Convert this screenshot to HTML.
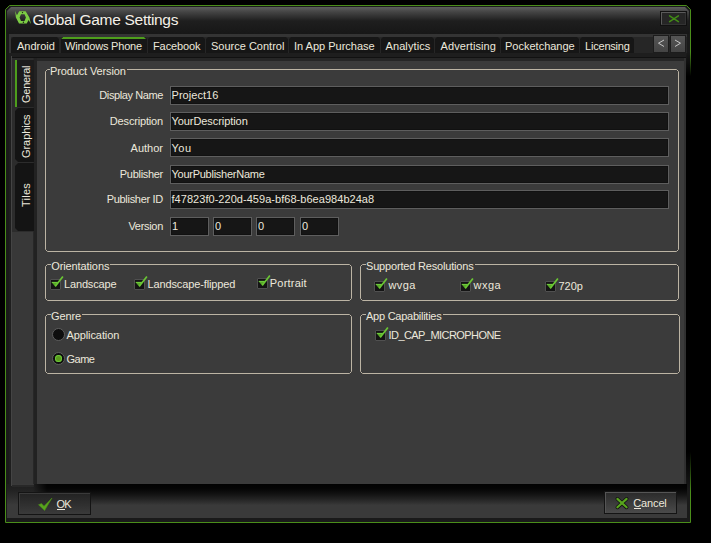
<!DOCTYPE html>
<html><head><meta charset="utf-8">
<style>
*{box-sizing:border-box;margin:0;padding:0}
html,body{width:711px;height:543px;overflow:hidden;background:#000}
body{position:relative;font-family:"Liberation Sans",sans-serif;font-size:11px;color:#ece8dc}
.a{position:absolute}
.t{position:absolute;white-space:pre;line-height:1}
.tab{position:absolute;top:37px;height:16px;background:#161616;clip-path:polygon(0 2px,2px 0,calc(100% - 2px) 0,100% 2px,100% 100%,0 100%)}
.tab .t{top:4px}
.grp{position:absolute}
.gl{position:absolute;top:-3px;background:#3b3b3b;white-space:pre;line-height:1;padding:0 1px 0 0}
.inp{position:absolute;left:170px;width:499px;height:19px;background:#161616;border:1px solid #5e5e5e;box-shadow:inset 0 0 0 1px #111}
.inp .t{left:0.5px;top:3px}
.lbl{position:absolute;right:548px;white-space:pre;line-height:1}
.cb{position:absolute;width:11px;height:11px;border:1px solid #505050;background:#141414;border-radius:1px}
.cb svg{position:absolute;left:-1px;top:-3px;overflow:visible}
.rb{position:absolute;width:13px;height:13px;border-radius:50%;background:#0e0e0e;border:1px solid #5e5e5e}
.ct{position:absolute;white-space:pre;line-height:1}
</style></head><body>
<!-- window frame -->
<svg class="a" style="left:0;top:0" width="711" height="543">
  <defs>
    <linearGradient id="rg" x1="0" y1="0" x2="0" y2="1">
      <stop offset="0" stop-color="#4e9a18"/>
      <stop offset="0.08" stop-color="#4e9a18"/>
      <stop offset="0.14" stop-color="#0a1205"/>
      <stop offset="0.92" stop-color="#0a1205"/>
      <stop offset="0.98" stop-color="#4e9a18"/>
      <stop offset="1" stop-color="#4e9a18"/>
    </linearGradient>
    <linearGradient id="rd" x1="0" y1="0" x2="0" y2="1">
      <stop offset="0" stop-color="#000" stop-opacity="0"/>
      <stop offset="0.1" stop-color="#000" stop-opacity="0"/>
      <stop offset="0.16" stop-color="#000" stop-opacity="1"/>
      <stop offset="0.9" stop-color="#000" stop-opacity="1"/>
      <stop offset="0.96" stop-color="#000" stop-opacity="0"/>
      <stop offset="1" stop-color="#000" stop-opacity="0"/>
    </linearGradient>
  </defs>
  <polygon points="5.5,9.5 9.5,5.5 686.5,5.5 690.5,9.5 690.5,522.5 5.5,522.5" fill="#1a1a1a" stroke="#4a8e1a" stroke-width="1"/>
</svg>
<!-- title bar gradient -->
<div class="a" style="left:7px;top:7px;width:682px;height:27px;background:linear-gradient(#5e5e5e 0px,#444 5px,#1e1e1e 14px,#171717 27px);clip-path:polygon(4px 0,678px 0,682px 4px,682px 27px,0 27px,0 4px)"></div>
<!-- logo -->
<svg class="a" style="left:12px;top:8px" width="22" height="20" viewBox="0 0 22 20">
  <path d="M3.1,2.8 L4.9,7.2 L7.2,3.2 L13.6,3.2 L17.4,9.4 L19,16 L16.6,12 L14.7,15.6 L7,15.6 L3.9,9.4 Z M7.6,9.6 L9,6.3 L12.5,6.3 L13.9,9.6 L12.5,12.9 L9,12.9 Z" fill="#7ccc44" fill-rule="evenodd"/>
  <circle cx="10.5" cy="4.6" r="0.7" fill="#1a1a1a"/><circle cx="11.4" cy="14.2" r="0.7" fill="#1a1a1a"/>
</svg>
<div class="t" style="left:32.5px;top:11.5px;font-size:15.5px;color:#f4f0e8;letter-spacing:-0.3px">Global Game Settings</div>
<!-- close button -->
<div class="a" style="left:660px;top:11px;width:27px;height:15px;background:#111;border:1px solid #111"></div>
<div class="a" style="left:661px;top:12px;width:25px;height:13px;background:#262626;border-left:1px solid #5a5a5a;border-top:1px solid #5a5a5a;border-right:1px solid #333;border-bottom:1px solid #333"></div>
<svg class="a" style="left:660px;top:11px" width="27" height="15"><path d="M9.6,4.9 L18.4,10.6 M18.4,4.9 L9.6,10.6" stroke="#428c16" stroke-width="1.5" stroke-linecap="round"/></svg>

<!-- tab strip -->
<div class="a" style="left:9px;top:34px;width:678px;height:20px;background:#262626;border-top:3px solid #343434;border-left:2px solid #343434"></div>
<div class="tab" style="left:11px;width:48px"><span class="t" style="left:6px;letter-spacing:0px">Android</span></div>
<div class="tab" style="left:61px;width:86px;background:#161616"><div class="a" style="left:0;top:0;width:85px;height:2px;background:#4e9e1c;clip-path:polygon(0 2px,2px 0,83px 0,85px 2px)"></div><span class="t" style="left:4px;letter-spacing:-0.2px">Windows Phone</span></div>
<div class="tab" style="left:148px;width:57px"><span class="t" style="left:5px;letter-spacing:-0.1px">Facebook</span></div>
<div class="tab" style="left:206px;width:82px"><span class="t" style="left:5px;letter-spacing:0px">Source Control</span></div>
<div class="tab" style="left:289px;width:91px"><span class="t" style="left:5px;letter-spacing:0px">In App Purchase</span></div>
<div class="tab" style="left:381px;width:53px"><span class="t" style="left:4.5px;letter-spacing:0.1px">Analytics</span></div>
<div class="tab" style="left:435px;width:65px"><span class="t" style="left:5.5px;letter-spacing:0.1px">Advertising</span></div>
<div class="tab" style="left:501px;width:78px"><span class="t" style="left:4px;letter-spacing:0px">Pocketchange</span></div>
<div class="tab" style="left:580px;width:54px"><span class="t" style="left:5px;letter-spacing:-0.2px">Licensing</span></div>
<!-- scroll buttons -->
<div class="a" style="left:653px;top:35px;width:16px;height:18px;background:linear-gradient(#555,#444);border:1px solid #1c1c1c"></div>
<div class="a" style="left:670px;top:35px;width:16px;height:18px;background:linear-gradient(#555,#444);border:1px solid #1c1c1c"></div>
<svg class="a" style="left:653px;top:35px" width="33" height="18"><path d="M11,5 L5.5,8.2 L11,11.5 M22,5 L27.5,8.2 L22,11.5" stroke="#d4d4d4" stroke-width="0.9" fill="none"/></svg>

<!-- tab page frame -->
<div class="a" style="left:9px;top:53px;width:678px;height:434px;background:#1e1e1e"></div>
<div class="a" style="left:11px;top:57px;width:675px;height:430px;background:#262626;border-top:1px solid #111"></div><div class="a" style="left:11px;top:56px;width:1px;height:430px;background:#444"></div>
<!-- vertical tabs column -->
<div class="a" style="left:12px;top:58px;width:22px;height:427px;background:#383838"></div><div class="a" style="left:12px;top:58px;width:22px;height:174px;background:#2c2c2c"></div><div class="a" style="left:33px;top:58px;width:4px;height:427px;background:linear-gradient(90deg,#2c2c2c 0,#222 1px,#222 100%)"></div>
<div class="a" style="left:15px;top:60px;width:19px;height:47px;background:#1c1c1c;border-left:2px solid #4e9e1c"></div>
<div class="a" style="left:15px;top:108px;width:19px;height:54px;background:#141414;clip-path:polygon(0 3px,3px 0,100% 0,100% 100%,3px 100%,0 calc(100% - 3px))"></div>
<div class="a" style="left:15px;top:163px;width:19px;height:68px;background:#141414;clip-path:polygon(0 3px,3px 0,100% 0,100% 100%,3px 100%,0 calc(100% - 3px))"></div>
<div class="t" style="left:21px;top:103.4px;transform:rotate(-90deg);transform-origin:0 0;letter-spacing:-0.27px">General</div>
<div class="t" style="left:21px;top:158px;transform:rotate(-90deg);transform-origin:0 0;letter-spacing:-0.06px">Graphics</div>
<div class="t" style="left:21px;top:207.3px;transform:rotate(-90deg);transform-origin:0 0;letter-spacing:0.25px">Tiles</div>

<div class="a" style="left:684px;top:58px;width:2px;height:428px;background:#303030"></div>
<!-- content panel -->
<div class="a" style="left:37px;top:61px;width:647px;height:423px;background:#3b3b3b"></div>

<svg class="a" style="left:0;top:0" width="711" height="543"><g fill="none" stroke="#bcb4a4" stroke-width="1"><polygon points="45.5,71.5 47.5,69.5 676.5,69.5 678.5,71.5 678.5,249.5 676.5,251.5 47.5,251.5 45.5,249.5"/><polygon points="45.5,266.5 47.5,264.5 349.5,264.5 351.5,266.5 351.5,298.5 349.5,300.5 47.5,300.5 45.5,298.5"/><polygon points="45.5,316.5 47.5,314.5 349.5,314.5 351.5,316.5 351.5,371.5 349.5,373.5 47.5,373.5 45.5,371.5"/><polygon points="360.5,266.5 362.5,264.5 676.5,264.5 678.5,266.5 678.5,298.5 676.5,300.5 362.5,300.5 360.5,298.5"/><polygon points="360.5,316.5 362.5,314.5 677.5,314.5 679.5,316.5 679.5,371.5 677.5,373.5 362.5,373.5 360.5,371.5"/></g></svg>
<!-- Product version group -->
<div class="grp" style="left:45px;top:69px;width:634px;height:183px"><span class="gl" style="left:5px;letter-spacing:-0.13px">Product Version</span></div>
<div class="lbl" style="top:90px;letter-spacing:-0.4px">Display Name</div>
<div class="lbl" style="top:116px;letter-spacing:-0.17px">Description</div>
<div class="lbl" style="top:142.5px;letter-spacing:0px">Author</div>
<div class="lbl" style="top:169px;letter-spacing:-0.3px">Publisher</div>
<div class="lbl" style="top:194px;letter-spacing:-0.3px">Publisher ID</div>
<div class="lbl" style="top:221px;letter-spacing:-0.3px">Version</div>
<div class="inp" style="top:86px"><span class="t" style="letter-spacing:0.05px">Project16</span></div>
<div class="inp" style="top:112px"><span class="t" style="letter-spacing:-0.07px">YourDescription</span></div>
<div class="inp" style="top:138px"><span class="t" style="top:3.5px;letter-spacing:0.5px">You</span></div>
<div class="inp" style="top:165px"><span class="t" style="letter-spacing:-0.26px">YourPublisherName</span></div>
<div class="inp" style="top:190px"><span class="t" style="letter-spacing:0.04px">f47823f0-220d-459a-bf68-b6ea984b24a8</span></div>
<div class="inp" style="top:217px;width:39px"><span class="t" style="left:1px">1</span></div>
<div class="inp" style="top:217px;left:213px;width:39px"><span class="t" style="left:1px">0</span></div>
<div class="inp" style="top:217px;left:256px;width:39px"><span class="t" style="left:1px">0</span></div>
<div class="inp" style="top:217px;left:300px;width:39px"><span class="t" style="left:1px">0</span></div>

<!-- Orientations -->
<div class="grp" style="left:45px;top:264px;width:307px;height:37px"><span class="gl" style="left:6.2px;letter-spacing:-0.1px">Orientations</span></div>
<!-- Genre -->
<div class="grp" style="left:45px;top:314px;width:307px;height:60px"><span class="gl" style="left:6px;letter-spacing:-0.1px">Genre</span></div>
<!-- Supported Resolutions -->
<div class="grp" style="left:360px;top:264px;width:319px;height:37px"><span class="gl" style="left:6px;letter-spacing:-0.18px">Supported Resolutions</span></div>
<!-- App Capabilities -->
<div class="grp" style="left:360px;top:314px;width:320px;height:60px"><span class="gl" style="left:6px;letter-spacing:-0.25px">App Capabilities</span></div>

<!-- checkboxes -->
<div class="cb" style="left:50px;top:279px"><svg width="14" height="14"><path d="M1.6,5.2 L8.4,5.2 L5.5,9.9 Z" fill="#58a828"/><path d="M1.8,5.4 L8.2,5.4" stroke="#74d040" stroke-width="1"/><path d="M5.3,9.3 L12.9,-0.4" stroke="#6ac634" stroke-width="1.7"/></svg></div>
<div class="ct" style="left:64px;top:279px;letter-spacing:-0.15px">Landscape</div>
<div class="cb" style="left:134px;top:279px"><svg width="14" height="14"><path d="M1.6,5.2 L8.4,5.2 L5.5,9.9 Z" fill="#58a828"/><path d="M1.8,5.4 L8.2,5.4" stroke="#74d040" stroke-width="1"/><path d="M5.3,9.3 L12.9,-0.4" stroke="#6ac634" stroke-width="1.7"/></svg></div>
<div class="ct" style="left:147.5px;top:279px;letter-spacing:-0.12px">Landscape-flipped</div>
<div class="cb" style="left:257px;top:278px"><svg width="14" height="14"><path d="M1.6,5.2 L8.4,5.2 L5.5,9.9 Z" fill="#58a828"/><path d="M1.8,5.4 L8.2,5.4" stroke="#74d040" stroke-width="1"/><path d="M5.3,9.3 L12.9,-0.4" stroke="#6ac634" stroke-width="1.7"/></svg></div>
<div class="ct" style="left:269.8px;top:278px;letter-spacing:0.2px">Portrait</div>

<div class="cb" style="left:374px;top:281px"><svg width="14" height="14"><path d="M1.6,5.2 L8.4,5.2 L5.5,9.9 Z" fill="#58a828"/><path d="M1.8,5.4 L8.2,5.4" stroke="#74d040" stroke-width="1"/><path d="M5.3,9.3 L12.9,-0.4" stroke="#6ac634" stroke-width="1.7"/></svg></div>
<div class="ct" style="left:388.5px;top:280px;letter-spacing:0.4px">wvga</div>
<div class="cb" style="left:460px;top:281px"><svg width="14" height="14"><path d="M1.6,5.2 L8.4,5.2 L5.5,9.9 Z" fill="#58a828"/><path d="M1.8,5.4 L8.2,5.4" stroke="#74d040" stroke-width="1"/><path d="M5.3,9.3 L12.9,-0.4" stroke="#6ac634" stroke-width="1.7"/></svg></div>
<div class="ct" style="left:473.5px;top:280px;letter-spacing:0.5px">wxga</div>
<div class="cb" style="left:545px;top:281px"><svg width="14" height="14"><path d="M1.6,5.2 L8.4,5.2 L5.5,9.9 Z" fill="#58a828"/><path d="M1.8,5.4 L8.2,5.4" stroke="#74d040" stroke-width="1"/><path d="M5.3,9.3 L12.9,-0.4" stroke="#6ac634" stroke-width="1.7"/></svg></div>
<div class="ct" style="left:558.5px;top:280.5px">720p</div>

<div class="cb" style="left:375px;top:330px"><svg width="14" height="14"><path d="M1.6,5.2 L8.4,5.2 L5.5,9.9 Z" fill="#58a828"/><path d="M1.8,5.4 L8.2,5.4" stroke="#74d040" stroke-width="1"/><path d="M5.3,9.3 L12.9,-0.4" stroke="#6ac634" stroke-width="1.7"/></svg></div>
<div class="ct" style="left:388.5px;top:330px;letter-spacing:-0.56px">ID_CAP_MICROPHONE</div>

<!-- radios -->
<div class="rb" style="left:52px;top:328px"></div>
<div class="ct" style="left:66.5px;top:330px;letter-spacing:-0.1px">Application</div>
<div class="rb" style="left:52px;top:352px"><div class="a" style="left:2px;top:2px;width:7px;height:7px;border-radius:50%;background:#5a9a1e;box-shadow:inset 0 0 0 1px #6cc83a"></div></div>
<div class="ct" style="left:66.5px;top:354px;letter-spacing:-0.5px">Game</div>

<!-- bottom area -->
<div class="a" style="left:7px;top:484px;width:680px;height:34px;background:linear-gradient(#1e1e1e 0px,#222 6px,#2e2e2e 14px,#3a3a3a 21px,#3a3a3a 34px)"></div><div class="a" style="left:11px;top:484px;width:1px;height:2px;background:#444"></div><div class="a" style="left:12px;top:484px;width:22px;height:1px;background:#393939"></div><div class="a" style="left:12px;top:485px;width:22px;height:2px;background:#282828"></div><div class="a" style="left:33px;top:484px;width:654px;height:22px;background:linear-gradient(rgba(0,0,0,.92) 0px,rgba(0,0,0,.85) 4px,rgba(0,0,0,.35) 13px,rgba(0,0,0,0) 21px);-webkit-mask-image:linear-gradient(90deg,transparent 0,#000 14px)"></div>
<div class="a" style="left:18px;top:492px;width:73px;height:23px;background:linear-gradient(#222,#3a3a3a);border:1px solid #141414;box-shadow:inset 1px 1px 0 #3a3a3a"></div>
<div class="a" style="left:604px;top:491px;width:73px;height:23px;background:linear-gradient(#2a2a2a,#4a4a4a);border:1px solid #141414;box-shadow:inset 1px 1px 0 #555"></div>
<svg class="a" style="left:36px;top:496px" width="18" height="16"><path d="M2.5,8.8 L5.5,7.6 L8,10.2 L16,2 L8.6,14.5 Z" fill="#58a41e" stroke="#4a8c16" stroke-width="0.6" stroke-linejoin="round"/></svg>
<div class="t" style="left:56.5px;top:499px;letter-spacing:-0.9px">OK</div><div class="a" style="left:57px;top:509px;width:8px;height:1px;background:#ece8dc"></div>
<svg class="a" style="left:612px;top:494px" width="20" height="18"><path d="M5.4,4.9 L14.6,13.3 M14.6,4.9 L5.4,13.3" stroke="#111" stroke-width="3.8" stroke-linecap="round"/><path d="M5.4,4.9 L14.6,13.3 M14.6,4.9 L5.4,13.3" stroke="#58a41e" stroke-width="2.2" stroke-linecap="round"/></svg>
<div class="t" style="left:633.3px;top:498.2px;letter-spacing:-0.15px">Cancel</div><div class="a" style="left:634px;top:508px;width:7px;height:1px;background:#ece8dc"></div>
<!-- right fade overlay -->
<div class="a" style="left:686px;top:52px;width:6px;height:440px;background:linear-gradient(rgba(0,0,0,0),#000 24px,#000 400px,rgba(0,0,0,0))"></div>
</body></html>
